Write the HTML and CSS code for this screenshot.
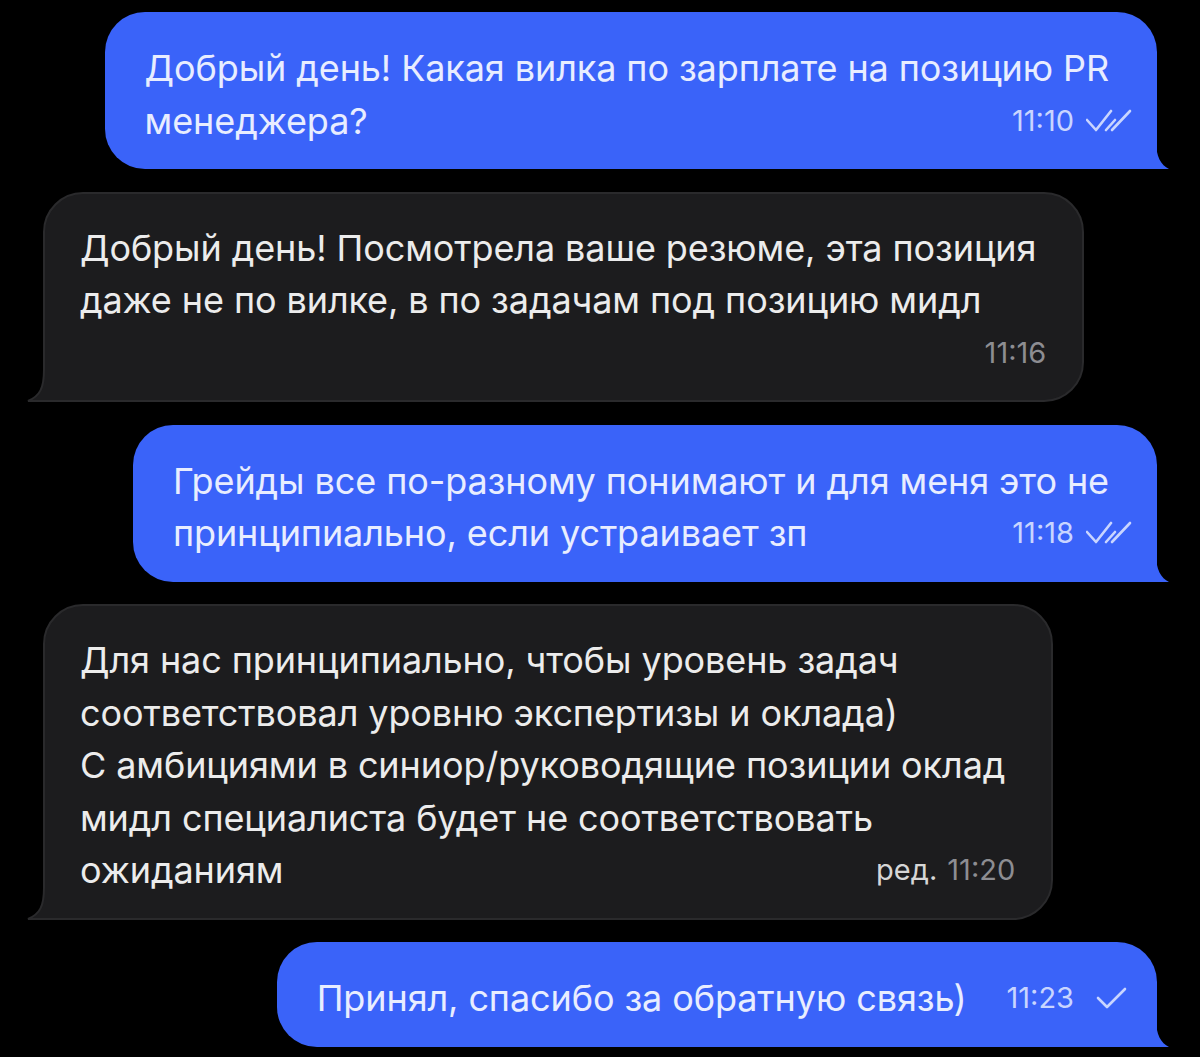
FILE: index.html
```html
<!DOCTYPE html>
<html lang="ru">
<head>
    <meta charset="UTF-8">
    <meta name="viewport" content="width=device-width, initial-scale=1.0">
    <title>Чат</title>
    <link rel="stylesheet" href="styles.css">
</head>
<body>
    <div class="chat">

        <!-- outgoing -->
        <div class="msg out">
            <div class="line">Добрый день! Какая вилка по зарплате на позицию PR</div>
            <div class="line last">
                <span>менеджера?</span>
                <span class="meta">
                    <span class="time">11:10</span>
                    <svg class="check" viewBox="0 0 46 24"><path d="M1 11 L10 21 L25 2"/><path d="M20 21 L29 11"/><path d="M26 21 L44 2"/></svg>
                </span>
            </div>
            <svg class="tail" viewBox="0 0 16 32"><path d="M0 0 H2 V4 C2 20 7 28 15 32 H0 Z"/></svg>
        </div>

        <!-- incoming -->
        <div class="msg in">
            <div class="line">Добрый день! Посмотрела ваше резюме, эта позиция</div>
            <div class="line">даже не по вилке, в по задачам под позицию мидл</div>
            <div class="line last end">
                <span class="meta"><span class="time">11:16</span></span>
            </div>
            <svg class="tail" viewBox="0 0 20 32"><path class="fill" d="M17 0 C17 18 13 26 1 31 L22 31 L22 0 Z"/><path class="edge" d="M17 0 C17 18 13 26 1 31 L20 31"/></svg>
        </div>

        <div class="msg out">
            <div class="line">Грейды все по-разному понимают и для меня это не</div>
            <div class="line last">
                <span>принципиально, если устраивает зп</span>
                <span class="meta">
                    <span class="time">11:18</span>
                    <svg class="check" viewBox="0 0 46 24"><path d="M1 11 L10 21 L25 2"/><path d="M20 21 L29 11"/><path d="M26 21 L44 2"/></svg>
                </span>
            </div>
            <svg class="tail" viewBox="0 0 16 32"><path d="M0 0 H2 V4 C2 20 7 28 15 32 H0 Z"/></svg>
        </div>

        <div class="msg in">
            <div class="line">Для нас принципиально, чтобы уровень задач</div>
            <div class="line">соответствовал уровню экспертизы и оклада)</div>
            <div class="line">С амбициями в синиор/руководящие позиции оклад</div>
            <div class="line">мидл специалиста будет не соответствовать</div>
            <div class="line last">
                <span>ожиданиям</span>
                <span class="meta"><span class="edited">ред.</span><span class="time">11:20</span></span>
            </div>
            <svg class="tail" viewBox="0 0 20 32"><path class="fill" d="M17 0 C17 18 13 26 1 31 L22 31 L22 0 Z"/><path class="edge" d="M17 0 C17 18 13 26 1 31 L20 31"/></svg>
        </div>

        <div class="msg out">
            <div class="line last">
                <span>Принял, спасибо за обратную связь)</span>
                <span class="meta">
                    <span class="time">11:23</span>
                    <svg class="check" viewBox="0 0 46 24"><path d="M12 12 L21 21 L39 3"/></svg>
                </span>
            </div>
            <svg class="tail" viewBox="0 0 16 32"><path d="M0 0 H2 V4 C2 20 7 28 15 32 H0 Z"/></svg>
        </div>

    </div>
</body>
</html>
```

FILE: styles.css
```css
body {
    margin: 0;
    background-color: #000;
    font-family: 'Inter', 'Roboto', sans-serif;
}
.chat {
    display: flex;
    flex-direction: column;
    gap: 22.5px;
    padding: 12px 43px;
}
.msg {
    position: relative;
    padding: 30px 48px 22px 40px;
    border-radius: 40px;
    font-size: 36px;
    line-height: 52.5px;
    letter-spacing: -0.1px;
    white-space: nowrap;
}
.out {
    align-self: flex-end;
    background-color: #3a63f9;
    color: #e8edff;
    border-bottom-right-radius: 0;
}
.in {
    align-self: flex-start;
    background-color: #1c1c1e;
    border: 2px solid #2a2a2c;
    color: #ececec;
    border-bottom-left-radius: 0;
    padding: 28px 46px 21px 35px;
}
.line.last {
    display: flex;
    justify-content: space-between;
    align-items: center;
    gap: 40px;
}
.line.end {
    justify-content: flex-end;
}
.meta {
    display: flex;
    align-items: center;
    gap: 12px;
    font-size: 29px;
    letter-spacing: 0;
}
.out .meta {
    color: #c9d5ff;
    margin-right: -23px;
}
.in .meta {
    color: #8d8d92;
    margin-right: -10px;
    gap: 10px;
}
.in .meta .edited {
    color: #d6d6d6;
}
.check {
    width: 46px;
    height: 24px;
    fill: none;
    stroke: currentColor;
    stroke-width: 2.6;
    stroke-linecap: round;
    stroke-linejoin: round;
}
.tail {
    position: absolute;
    bottom: 0;
    width: 16px;
    height: 32px;
}
.out .tail {
    right: -13px;
    fill: #3a63f9;
}
.in .tail {
    left: -18px;
    bottom: -2px;
    width: 20px;
}
.in .tail .fill {
    fill: #1c1c1e;
}
.in .tail .edge {
    fill: none;
    stroke: #2a2a2c;
    stroke-width: 2;
}
```
